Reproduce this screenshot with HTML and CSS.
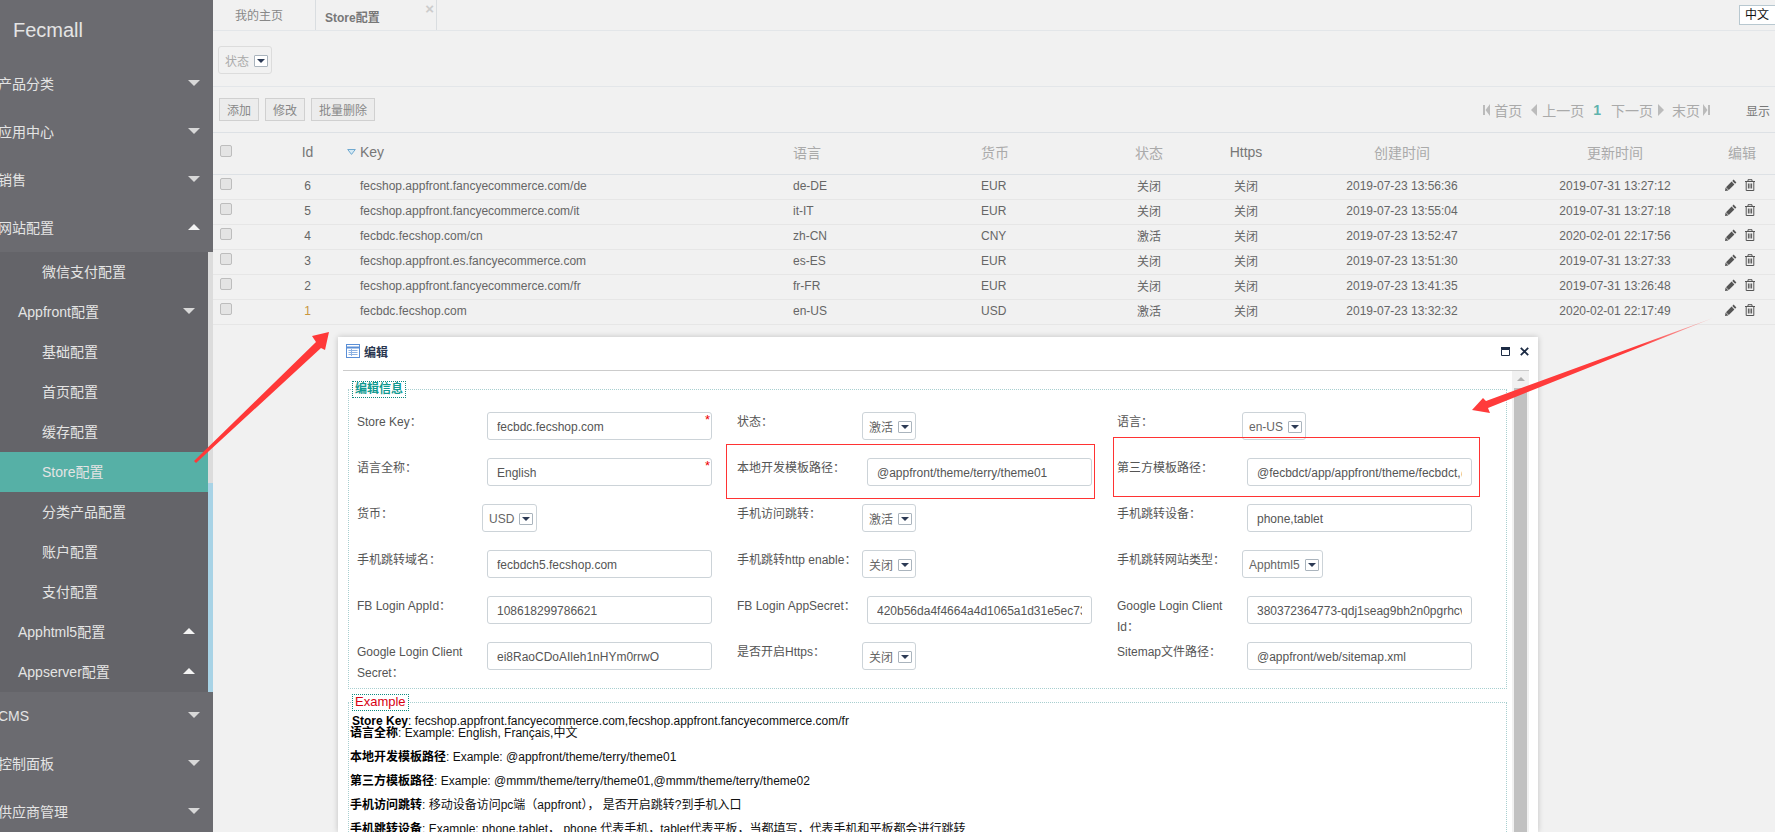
FILE: index.html

```html
<!DOCTYPE html>
<html lang="en">
<head>
  <meta charset="UTF-8" />
  <meta name="viewport" content="width=device-width, initial-scale=1.0" />
  <title>Store配置</title>
  <link rel="stylesheet" href="styles.css">
</head>
<body>
  <svg width="0" height="0" class="defs">
    <symbol id="pencil" viewBox="0 0 12 12">
      <path d="M8.6.6l2.8 2.8-1.3 1.3-2.8-2.8zM6.6 2.6l2.8 2.8-5.6 5.6-2.8-2.8z" fill="#555"/>
      <path d="M.6 8.6l2.8 2.8L0 12z" fill="#555"/>
    </symbol>
    <symbol id="trash" viewBox="0 0 11 12">
      <path d="M.5 2.5h10M3.5 2.5V.7h4v1.8M1.7 2.5v9h7.6v-9M3.9 4.5v5M5.5 4.5v5M7.1 4.5v5" fill="none" stroke="#555"/>
    </symbol>
  </svg>

  <div class="page">
    <aside class="sidebar">
      <div class="logo">Fecmall</div>
      <div class="menu-item down">产品分类</div>
      <div class="menu-item down">应用中心</div>
      <div class="menu-item down">销售</div>
      <div class="menu-item up">网站配置</div>
      <div class="submenu">
        <div class="sub-list">
          <div class="sub-leaf">微信支付配置</div>
          <div class="sub-head down">Appfront配置</div>
          <div class="sub-leaf">基础配置</div>
          <div class="sub-leaf">首页配置</div>
          <div class="sub-leaf">缓存配置</div>
          <div class="sub-leaf active">Store配置</div>
          <div class="sub-leaf">分类产品配置</div>
          <div class="sub-leaf">账户配置</div>
          <div class="sub-leaf">支付配置</div>
          <div class="sub-head up">Apphtml5配置</div>
          <div class="sub-head up">Appserver配置</div>
        </div>
        <div class="sub-scroll"></div>
      </div>
      <div class="menu-item down">CMS</div>
      <div class="menu-item down">控制面板</div>
      <div class="menu-item down">供应商管理</div>
    </aside>

    <main class="main">
      <div class="tabs">
        <div class="tab">我的主页</div>
        <div class="tab current">Store配置<span class="tab-close">×</span></div>
        <div class="lang">中文</div>
      </div>

      <div class="filter">
        <div class="select muted">状态<span class="caret"></span></div>
      </div>

      <div class="toolbar">
        <div class="buttons">
          <button class="btn">添加</button>
          <button class="btn">修改</button>
          <button class="btn">批量删除</button>
        </div>
        <div class="pager">
          <svg class="pg-icon" viewBox="0 0 7 12"><path d="M0 1h2v10H0zM7 0v12L2.5 6z" fill="#bbb"/></svg>
          <span class="pg-first">首页</span>
          <svg class="pg-icon pg-gap" viewBox="0 0 7 12"><path d="M6 0v12L0 6z" fill="#bbb"/></svg>
          <span class="pg-first">上一页</span>
          <b class="pg-num">1</b>
          <span>下一页</span>
          <svg class="pg-icon pg-after" viewBox="0 0 7 12"><path d="M1 0v12l6-6z" fill="#bbb"/></svg>
          <span class="pg-last">末页</span>
          <svg class="pg-icon pg-end" viewBox="0 0 7 12"><path d="M5 1h2v10H5zM0 0v12l4.500-6z" fill="#bbb"/></svg>
          <span class="pg-show">显示</span>
        </div>
      </div>

      <table class="grid">
        <colgroup>
          <col class="c-check"><col class="c-id"><col class="c-key"><col class="c-lang"><col class="c-cur">
          <col class="c-status"><col class="c-https"><col class="c-created"><col class="c-updated"><col class="c-edit">
        </colgroup>
        <thead>
          <tr>
            <th><input type="checkbox" class="check"></th>
            <th class="center dark">Id</th>
            <th class="key-head"><svg class="sort" viewBox="0 0 9 6"><path d="M.7.5h7.600L4.500 5.400z" fill="#d5e9f4" stroke="#6fa9d0"/></svg>Key</th>
            <th class="left">语言</th>
            <th class="left">货币</th>
            <th class="center">状态</th>
            <th class="center dark">Https</th>
            <th class="center">创建时间</th>
            <th class="center">更新时间</th>
            <th class="left">编辑</th>
          </tr>
        </thead>
        <tbody id="rows"></tbody>
      </table>
    </main>

    <section class="modal">
      <header class="modal-head">
        <svg class="modal-icon" viewBox="0 0 14 14">
          <rect x=".5" y=".5" width="13" height="13" fill="#fff" stroke="#5b8fd6"/>
          <path d="M1 3.500h12" stroke="#5b8fd6" stroke-width="2"/>
          <path d="M2.500 6.500h9M2.500 8.500h9M2.500 10.500h9M5.500 5v7" stroke="#8fb3e3"/>
        </svg>
        <span class="modal-title">编辑</span>
        <svg class="win-max" viewBox="0 0 9 9"><path d="M.5 2.500h8v6h-8z" fill="none" stroke="#1c2b44"/><path d="M0 0h9v2.500H0z" fill="#1c2b44"/></svg>
        <svg class="win-close" viewBox="0 0 9 9"><path d="M.8.8l7.400 7.400M8.200.8L.8 8.200" stroke="#1c2b44" stroke-width="1.800"/></svg>
      </header>
      <div class="modal-wrap">
        <div class="modal-body">
          <fieldset class="box">
            <legend class="legend-info">编辑信息</legend>
            <div class="form">
              <div class="row"><label>Store Key：</label><div class="field"><input value="fecbdc.fecshop.com"><i class="req">*</i></div></div>
              <div class="row"><label>状态：</label><div class="select">激活<span class="caret"></span></div></div>
              <div class="row"><label>语言：</label><div class="select">en-US<span class="caret"></span></div></div>

              <div class="row"><label>语言全称：</label><div class="field"><input value="English"><i class="req">*</i></div></div>
              <div class="row"><label>本地开发模板路径：</label><div class="field"><input value="@appfront/theme/terry/theme01"></div></div>
              <div class="row"><label>第三方模板路径：</label><div class="field"><input value="@fecbdct/app/appfront/theme/fecbdct,@appfront/theme/terry"></div></div>

              <div class="row"><label>货币：</label><div class="select">USD<span class="caret"></span></div></div>
              <div class="row"><label>手机访问跳转：</label><div class="select">激活<span class="caret"></span></div></div>
              <div class="row"><label>手机跳转设备：</label><div class="field"><input value="phone,tablet"></div></div>

              <div class="row"><label>手机跳转域名：</label><div class="field"><input value="fecbdch5.fecshop.com"></div></div>
              <div class="row"><label>手机跳转http enable：</label><div class="select">关闭<span class="caret"></span></div></div>
              <div class="row"><label>手机跳转网站类型：</label><div class="select">Apphtml5<span class="caret"></span></div></div>

              <div class="row"><label>FB Login AppId：</label><div class="field"><input value="108618299786621"></div></div>
              <div class="row"><label>FB Login AppSecret：</label><div class="field"><input value="420b56da4f4664a4d1065a1d31e5ec73abcdef"></div></div>
              <div class="row"><label>Google Login Client Id：</label><div class="field"><input value="380372364773-qdj1seag9bh2n0pgrhcvabcdefgh"></div></div>

              <div class="row"><label>Google Login Client Secret：</label><div class="field"><input value="ei8RaoCDoAIleh1nHYm0rrwO"></div></div>
              <div class="row"><label>是否开启Https：</label><div class="select">关闭<span class="caret"></span></div></div>
              <div class="row"><label>Sitemap文件路径：</label><div class="field"><input value="@appfront/web/sitemap.xml"></div></div>
            </div>
          </fieldset>

          <fieldset class="box example">
            <legend class="legend-example">Example</legend>
            <div class="notes">
              <div class="note first"><b>Store Key</b>: fecshop.appfront.fancyecommerce.com,fecshop.appfront.fancyecommerce.com/fr</div>
              <div class="note tight"><b>语言全称</b>: Example: English, Français,中文</div>
              <div class="note"><b>本地开发模板路径</b>: Example: @appfront/theme/terry/theme01</div>
              <div class="note"><b>第三方模板路径</b>: Example: @mmm/theme/terry/theme01,@mmm/theme/terry/theme02</div>
              <div class="note"><b>手机访问跳转</b>: 移动设备访问pc端（appfront）， 是否开启跳转?到手机入口</div>
              <div class="note"><b>手机跳转设备</b>: Example: phone,tablet， phone 代表手机，tablet代表平板，当都填写，代表手机和平板都会进行跳转</div>
            </div>
          </fieldset>
        </div>
        <div class="modal-scroll"><span class="scroll-up"></span><span class="scroll-thumb"></span></div>
      </div>
    </section>

    <div class="mark mark-a"></div>
    <div class="mark mark-b"></div>

    <svg class="arrows" viewBox="0 0 1775 832">
      <defs>
        <linearGradient id="fade" gradientUnits="userSpaceOnUse" x1="1713" y1="318" x2="1640" y2="346">
          <stop offset="0" stop-color="#ff3b3b" stop-opacity=".2"/>
          <stop offset="1" stop-color="#ff3b3b"/>
        </linearGradient>
      </defs>
      <path d="M329 332L312 336 316 342 194 461 196 463 321 348 325 350z" fill="#ff3838"/>
      <path d="M1472 410L1483 398 1486 401 1713 318 1488 408 1490 413z" fill="url(#fade)"/>
    </svg>
  </div>

  <script>
    var data = [
      [6, 'fecshop.appfront.fancyecommerce.com/de', 'de-DE', 'EUR', '关闭', '2019-07-23 13:56:36', '2019-07-31 13:27:12'],
      [5, 'fecshop.appfront.fancyecommerce.com/it', 'it-IT', 'EUR', '关闭', '2019-07-23 13:55:04', '2019-07-31 13:27:18'],
      [4, 'fecbdc.fecshop.com/cn', 'zh-CN', 'CNY', '激活', '2019-07-23 13:52:47', '2020-02-01 22:17:56'],
      [3, 'fecshop.appfront.es.fancyecommerce.com', 'es-ES', 'EUR', '关闭', '2019-07-23 13:51:30', '2019-07-31 13:27:33'],
      [2, 'fecshop.appfront.fancyecommerce.com/fr', 'fr-FR', 'EUR', '关闭', '2019-07-23 13:41:35', '2019-07-31 13:26:48'],
      [1, 'fecbdc.fecshop.com', 'en-US', 'USD', '激活', '2019-07-23 13:32:32', '2020-02-01 22:17:49']
    ];
    var html = '';
    data.forEach(function (r) {
      html += '<tr>' +
        '<td><input type="checkbox" class="check"></td>' +
        '<td class="center' + (r[0] === 1 ? ' first-id' : '') + '">' + r[0] + '</td>' +
        '<td class="key">' + r[1] + '</td>' +
        '<td class="left">' + r[2] + '</td>' +
        '<td class="left">' + r[3] + '</td>' +
        '<td class="center">' + r[4] + '</td>' +
        '<td class="center">关闭</td>' +
        '<td class="center">' + r[5] + '</td>' +
        '<td class="center">' + r[6] + '</td>' +
        '<td class="ops"><svg class="op"><use href="#pencil"/></svg><svg class="op op-trash"><use href="#trash"/></svg></td>' +
        '</tr>';
    });
    document.getElementById('rows').innerHTML = html;
  </script>
</body>
</html>
```

FILE: styles.css

```css
* {
  box-sizing: border-box;
}
html, body {
  margin: 0;
  height: 100%;
  overflow: hidden;
}
body {
  font-family: "Liberation Sans", Arial, "Noto Sans CJK SC", sans-serif;
  font-size: 12px;
  color: #666;
  background: #f1f1f1;
}
.defs {
  position: absolute;
}
.page {
  position: relative;
  display: flex;
  width: 1775px;
  height: 832px;
  overflow: hidden;
}

/* sidebar */
.sidebar {
  flex: 0 0 213px;
  height: 832px;
  background: #6b6b70;
  color: #e4e4e4;
  font-size: 14px;
  overflow: hidden;
}
.logo {
  height: 60px;
  padding-left: 13px;
  font-size: 20px;
  line-height: 60px;
}
.menu-item {
  position: relative;
  height: 48px;
  line-height: 48px;
  margin-left: -2px;
}
.down::after, .up::after {
  content: "";
  position: absolute;
  right: 13px;
  top: 20px;
  border-left: 6px solid transparent;
  border-right: 6px solid transparent;
}
.down::after {
  border-top: 6px solid #d8d8d8;
}
.up::after {
  border-bottom: 6px solid #f4f4f4;
}
.submenu {
  display: flex;
  height: 440px;
  background: #646469;
}
.sub-list {
  flex: 0 0 208px;
}
.sub-leaf, .sub-head {
  position: relative;
  height: 40px;
  line-height: 40px;
}
.sub-leaf {
  padding-left: 42px;
}
.sub-head {
  padding-left: 18px;
}
.sub-head::after {
  right: 13px;
  top: 16px;
}
.sub-leaf.active {
  background: #56b0a6;
}
.sub-scroll {
  flex: 0 0 5px;
  background: linear-gradient(#dcdcdc 0, #dcdcdc 231px, #a8d3e6 231px);
}

/* top of the main area */
.main {
  flex: 1;
  min-width: 0;
}
.tabs {
  display: flex;
  height: 31px;
  border-bottom: 1px solid #e3e6e9;
}
.tab {
  position: relative;
  width: 102px;
  padding-top: 6px;
  padding-left: 22px;
  color: #888;
}
.tab.current {
  width: 122px;
  padding-left: 9px;
  padding-top: 8px;
  font-weight: bold;
  color: #777;
  border-left: 1px solid #d9dde0;
  border-right: 1px solid #d9dde0;
}
.tab-close {
  position: absolute;
  right: 2px;
  top: 1px;
  font-size: 15px;
  line-height: 15px;
  color: #ccc;
}
.lang {
  margin-left: auto;
  margin-top: 5px;
  width: 36px;
  height: 20px;
  line-height: 18px;
  padding-left: 5px;
  color: #111;
  background: #fff;
  border: 1px solid #b8c8d0;
  border-right: 0;
}
.filter {
  height: 56px;
  padding: 15px 0 0 5px;
  border-bottom: 1px solid #e3e6e9;
}
.toolbar {
  display: flex;
  justify-content: space-between;
  align-items: flex-start;
  height: 46px;
  padding-top: 11px;
  border-bottom: 1px solid #dde1e5;
}
.buttons {
  display: flex;
  gap: 6px;
  padding-left: 6px;
}
.btn {
  height: 23px;
  padding: 0 7px;
  font-family: inherit;
  font-size: 12px;
  color: #888;
  background: #ececec;
  border: 1px solid #d0d0d0;
}
.pager {
  display: flex;
  align-items: center;
  height: 24px;
  font-size: 14px;
  color: #aaa;
}
.pg-icon {
  width: 7px;
  height: 12px;
}
.pg-first {
  margin-left: 4px;
}
.pg-gap {
  margin-left: 9px;
}
.pg-num {
  margin: 0 10px 0 9px;
  color: #5fb3ad;
}
.pg-after {
  margin-left: 4px;
}
.pg-last {
  margin-left: 8px;
}
.pg-end {
  margin-left: 3px;
}
.pg-show {
  margin-left: 36px;
  margin-right: 5px;
  font-size: 12px;
  color: #777;
}

/* select box used in filter and form */
.select {
  display: inline-flex;
  align-items: center;
  height: 28px;
  padding: 1px 3px 0 6px;
  gap: 5px;
  margin-left: -5px;
  font-size: 12px;
  color: #666;
  background: #fff;
  border: 1px solid #ccd3d8;
  border-radius: 3px;
}
.select.muted {
  margin-left: 0;
  color: #aaa;
  background: transparent;
  border-color: #dcdcdc;
}
.caret {
  position: relative;
  width: 14px;
  height: 12px;
  background: #fff;
  border: 1px solid #aab4bd;
  border-radius: 1px;
}
.caret::after {
  content: "";
  position: absolute;
  left: 2px;
  top: 3px;
  border-left: 4px solid transparent;
  border-right: 4px solid transparent;
  border-top: 4px solid #2c3a55;
}

/* table */
.grid {
  width: 1562px;
  table-layout: fixed;
  border-collapse: collapse;
}
.c-check { width: 57px; }
.c-id { width: 75px; }
.c-key { width: 440px; }
.c-lang { width: 188px; }
.c-cur { width: 127px; }
.c-status { width: 98px; }
.c-https { width: 96px; }
.c-created { width: 216px; }
.c-updated { width: 210px; }
.c-edit { width: 55px; }
.grid th {
  height: 41px;
  padding: 0 0 2px;
  font-size: 14px;
  font-weight: normal;
  text-align: left;
  color: #aaa;
  border-bottom: 1px solid #dde1e5;
}
.grid td {
  height: 25px;
  padding: 0 0 2px;
  color: #666;
  border-bottom: 1px solid #e6e6e6;
}
.grid .center {
  text-align: center;
}
.grid .left {
  padding-left: 8px;
}
.grid .dark {
  color: #777;
}
.grid td.key {
  padding-left: 15px;
}
.grid th.key-head {
  padding-left: 2px;
  color: #777;
}
.grid td.first-id {
  color: #c8963e;
}
.sort {
  width: 9px;
  height: 6px;
  margin-right: 4px;
  vertical-align: 2px;
}
.check {
  display: block;
  appearance: none;
  width: 12px;
  height: 12px;
  margin: -3px 0 0 7px;
  background: #e4e4e4;
  border: 1px solid #bdbdbd;
  border-radius: 2px;
}
.grid td.ops {
  padding: 0 0 4px 5px;
  font-size: 0;
  line-height: 12px;
}
.op {
  display: inline-block;
  width: 12px;
  height: 12px;
  vertical-align: top;
}
.op-trash {
  margin-left: 7px;
}

/* edit window */
.modal {
  position: absolute;
  left: 338px;
  top: 337px;
  width: 1200px;
  height: 495px;
  color: #555;
  background: #fff;
  box-shadow: 0 0 6px rgba(0, 0, 0, 0.2);
}
.modal-head {
  display: flex;
  align-items: center;
  height: 34px;
  margin: 0 9px 0 5px;
  padding: 0 0 5px 3px;
  border-bottom: 1px solid #ccc;
}
.modal-icon {
  width: 14px;
  height: 14px;
  margin-right: 4px;
}
.modal-title {
  font-weight: bold;
  color: #2a3650;
}
.win-max {
  width: 9px;
  height: 9px;
  margin-left: auto;
}
.win-close {
  width: 9px;
  height: 9px;
  margin-left: 10px;
}
.modal-wrap {
  display: flex;
  width: 1191px;
  height: 461px;
}
.modal-body {
  width: 1174px;
  padding: 10px 5px 0 10px;
  overflow: hidden;
}
.modal-scroll {
  position: relative;
  width: 17px;
  background: #f1f1f1;
}
.scroll-up {
  position: absolute;
  left: 5px;
  top: 6px;
  border-left: 4px solid transparent;
  border-right: 4px solid transparent;
  border-bottom: 4px solid #b0b0b0;
}
.scroll-thumb {
  position: absolute;
  left: 2px;
  right: 2px;
  top: 17px;
  bottom: 0;
  background: #c1c1c1;
}
.box {
  margin: 0;
  padding: 14px 0 0 8px;
  height: 308px;
  border: 1px dotted #a8cfd0;
}
.box legend {
  height: 17px;
  margin-left: -5px;
  padding: 0 2px;
  line-height: 14px;
  border: 1px dotted #108a80;
}
.box .legend-example {
  margin-left: 2px;
  font-size: 13px;
  color: #d80012;
}
.legend-info {
  font-weight: bold;
  color: #109a90;
}
.form {
  display: grid;
  grid-template-columns: repeat(3, 380px);
  grid-auto-rows: 46px;
}
.row {
  display: flex;
  align-items: flex-start;
}
.row label {
  flex: 0 0 130px;
  padding-right: 4px;
  line-height: 21px;
  color: #555;
}
.field {
  position: relative;
  width: 225px;
}
.field input {
  display: block;
  width: 100%;
  height: 28px;
  padding: 1px 9px 0;
  font-family: inherit;
  font-size: 12px;
  color: #555;
  background: #fff;
  border: 1px solid #ccd3d8;
  border-radius: 3px;
  outline: none;
}
.req {
  position: absolute;
  right: 2px;
  top: 1px;
  font-style: normal;
  font-size: 13px;
  line-height: 14px;
  color: #e00;
}
.example {
  height: auto;
  margin-top: 5px;
  padding: 4px 0 40px 1px;
}
.notes {
  color: #111;
}
.note {
  line-height: 12px;
  margin-bottom: 12px;
}
.note.first {
  margin-bottom: 0;
  padding-left: 2px;
}
.note b {
  color: #000;
}

/* hand drawn notes on the screenshot */
.mark {
  position: absolute;
  border: 1px solid #f33;
}
.mark-a {
  left: 726px;
  top: 444px;
  width: 369px;
  height: 55px;
}
.mark-b {
  left: 1113px;
  top: 437px;
  width: 367px;
  height: 60px;
}
.arrows {
  position: absolute;
  left: 0;
  top: 0;
  width: 1775px;
  height: 832px;
  pointer-events: none;
}
```
